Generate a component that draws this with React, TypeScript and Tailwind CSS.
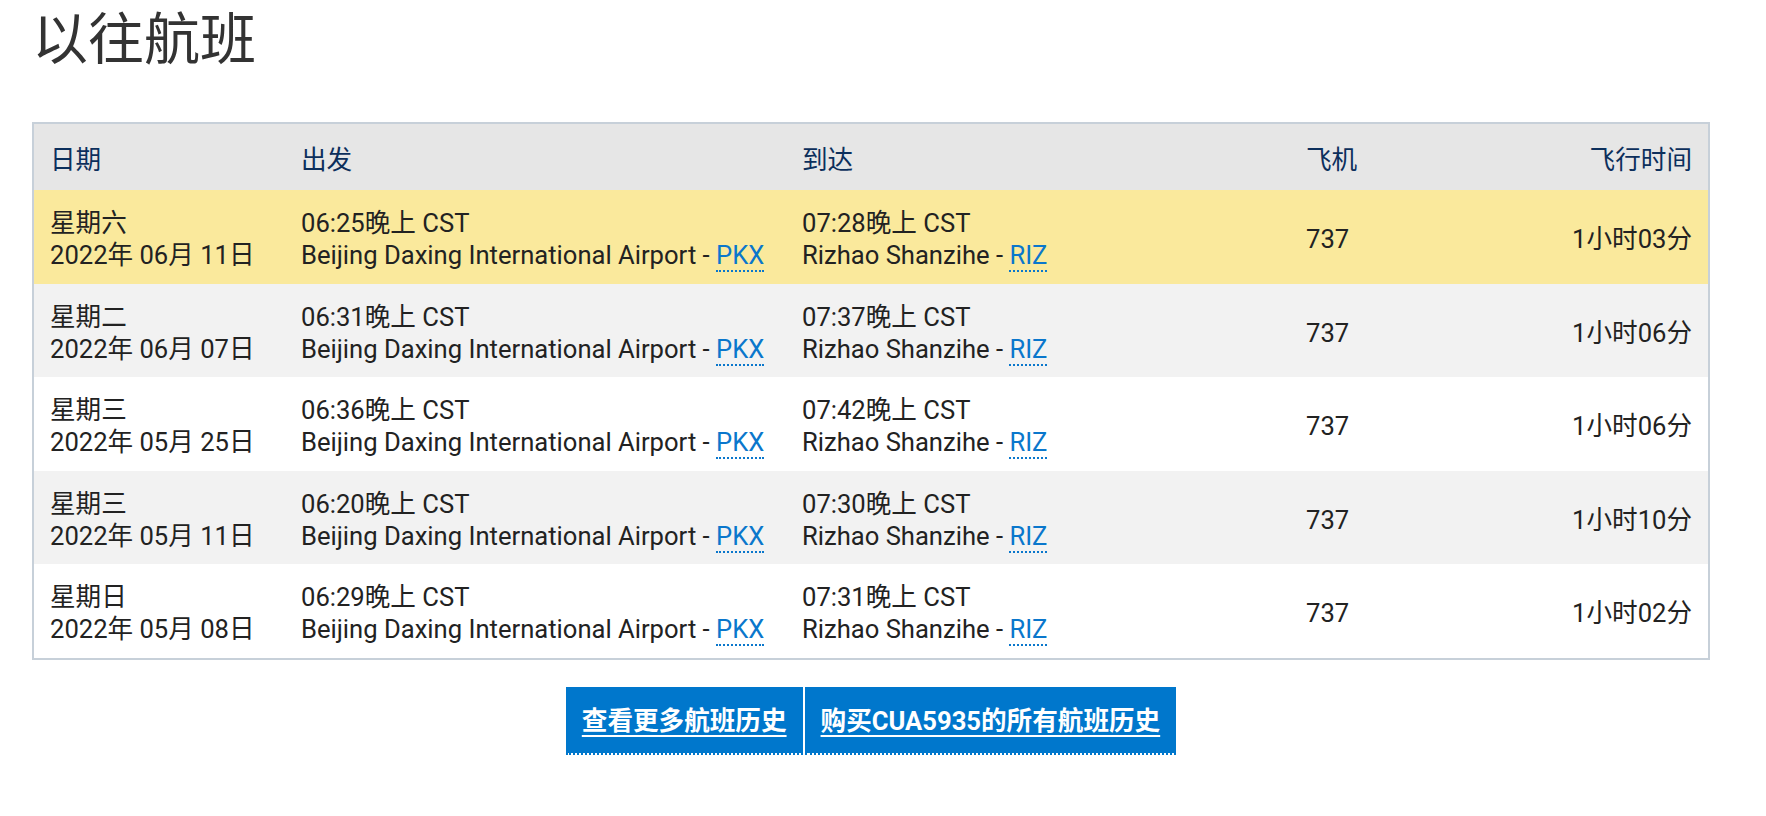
import React from "react";

const rows = [
  { day: "星期六", date: "2022年 06月 11日", dep: "06:25晚上 CST", arr: "07:28晚上 CST", dur: "1小时03分", bg: "bg-[#fae99c]" },
  { day: "星期二", date: "2022年 06月 07日", dep: "06:31晚上 CST", arr: "07:37晚上 CST", dur: "1小时06分", bg: "bg-[#f2f2f2]" },
  { day: "星期三", date: "2022年 05月 25日", dep: "06:36晚上 CST", arr: "07:42晚上 CST", dur: "1小时06分", bg: "bg-white" },
  { day: "星期三", date: "2022年 05月 11日", dep: "06:20晚上 CST", arr: "07:30晚上 CST", dur: "1小时10分", bg: "bg-[#f2f2f2]" },
  { day: "星期日", date: "2022年 05月 08日", dep: "06:29晚上 CST", arr: "07:31晚上 CST", dur: "1小时02分", bg: "bg-white" },
];

const grid = "grid grid-cols-[251px_501px_504px_1fr_auto] items-center pt-[5px]";

function Code({ children }: { children: React.ReactNode }) {
  return (
    <span className="text-[#0a77cc] border-b-2 border-dotted border-[#0a77cc]">{children}</span>
  );
}

export default function App() {
  return (
    <div
      className="w-[1766px] h-[816px] bg-white pl-[32px] overflow-hidden"
      style={{ fontFamily: 'Roboto, "Noto Sans CJK SC", sans-serif' }}
    >
      <h1 className="text-[56px] leading-[80px] text-[#333333] font-normal">以往航班</h1>
      <div className="mt-[42px] w-[1678px] border-2 border-[#c7d0d9] text-[25.6px] leading-[32px] text-[#222222]">
        <div className={`${grid} h-[66px] bg-[#e6e6e6] text-[#0c2f5c]`}>
          <div className="pl-[16px]">日期</div>
          <div className="pl-[16px]">出发</div>
          <div className="pl-[16px]">到达</div>
          <div className="pl-[16px]">飞机</div>
          <div className="pr-[16px] text-right">飞行时间</div>
        </div>
        {rows.map((r, i) => (
          <div key={i} className={`${grid} h-[93.5px] ${r.bg}`}>
            <div className="pl-[16px]">
              <div>{r.day}</div>
              <div>{r.date}</div>
            </div>
            <div className="pl-[16px]">
              <div>{r.dep}</div>
              <div>
                Beijing Daxing International Airport - <Code>PKX</Code>
              </div>
            </div>
            <div className="pl-[16px]">
              <div>{r.arr}</div>
              <div>
                Rizhao Shanzihe - <Code>RIZ</Code>
              </div>
            </div>
            <div className="pl-[16px]">737</div>
            <div className="pr-[16px] text-right">{r.dur}</div>
          </div>
        ))}
      </div>
      <div className="w-[1678px] mt-[27px] flex justify-center gap-[2px]">
        <a className="h-[68px] px-[16px] pt-[3px] bg-[#0077cc] bg-clip-padding border-b-2 border-dotted border-[#0077cc] flex items-center text-white font-bold text-[25.6px] underline decoration-2 underline-offset-[5px]">
          查看更多航班历史
        </a>
        <a className="h-[68px] px-[16px] pt-[3px] bg-[#0077cc] bg-clip-padding border-b-2 border-dotted border-[#0077cc] flex items-center text-white font-bold text-[25.6px] underline decoration-2 underline-offset-[5px]">
          购买CUA5935的所有航班历史
        </a>
      </div>
    </div>
  );
}
